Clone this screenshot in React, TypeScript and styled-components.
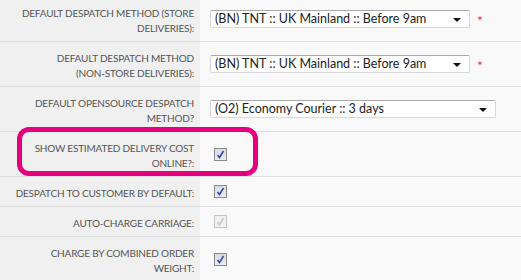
import React from "react";
import styled, { createGlobalStyle } from "styled-components";

const GlobalStyle = createGlobalStyle`
    html, body {
        margin: 0;
        padding: 0;
        background: #f9f9f9;
        font-family: Lato, "Open Sans", sans-serif;
        overflow: hidden;
    }
`

const Page = styled.div`
    position: relative;
    width: 521px;
    height: 280px;
    overflow: hidden;
`

const Table = styled.div`
    margin-top: -3px;
    display: flex;
    flex-direction: column;
`

const Row = styled.div`
    display: grid;
    grid-template-columns: 200px 1fr;
    border-bottom: 1px solid #dddddd;
`

const Label = styled.div`
    background: #f0f0f0;
    color: #555555;
    font-size: 10px;
    letter-spacing: -0.2px;
    line-height: 15px;
    text-transform: uppercase;
    text-align: right;
    padding: 9px 6px 5px 10px;
    display: flex;
    align-items: center;
    justify-content: flex-end;
`

const NoWrap = styled.span`
    white-space: nowrap;
`

const Value = styled.div`
    display: flex;
    align-items: center;
    gap: 7px;
    padding: 0 10px;
`

const Select = styled.div<{ $width: number }>`
    position: relative;
    box-sizing: border-box;
    width: ${(p) => p.$width}px;
    height: 18px;
    background: #ffffff;
    border: 1px solid #d8d8d8;
    border-top-color: #a9a9a9;
    border-radius: 2px;
    color: #222222;
    font-size: 12.5px;
    line-height: 16px;
    padding: 0 4px;
    white-space: nowrap;
    &::after {
        content: "";
        position: absolute;
        right: 8px;
        top: 7px;
        border-left: 4px solid transparent;
        border-right: 4px solid transparent;
        border-top: 4px solid #111111;
    }
`

const Required = styled.span`
    color: #f0344a;
    font-size: 14px;
    line-height: 14px;
    padding-top: 4px;
`

const Box = styled.span<{ $disabled?: boolean }>`
    box-sizing: border-box;
    width: 13px;
    height: 13px;
    margin-left: 4px;
    border: 1px solid ${(p) => (p.$disabled ? "#c4c4c4" : "#8a8a8a")};
    background: ${(p) => (p.$disabled ? "#f2f2f2" : "linear-gradient(#d7dbe6, #e9ecf2)")};
    display: flex;
    align-items: center;
    justify-content: center;
`

const Highlight = styled.div`
    position: absolute;
    left: 17px;
    top: 127px;
    width: 241px;
    height: 49px;
    box-sizing: border-box;
    border: 5px solid #e6007e;
    border-radius: 12px;
    pointer-events: none;
`

const Check = ({ disabled }: { disabled?: boolean }) => (
    <Box $disabled={disabled}>
        <svg width="9" height="9" viewBox="0 0 9 9">
            <path d="M1.5 5 L3.5 7.5 L7.5 1" fill="none" stroke={disabled ? "#c8c8c8" : "#3550a8"} strokeWidth="1.6" />
        </svg>
    </Box>
);

const App: React.FC = () => {
    return (
        <Page>
            <GlobalStyle />
            <Table>
                <Row>
                    <Label>Default despatch method (store deliveries):</Label>
                    <Value>
                        <Select $width={260}>(BN) TNT :: UK Mainland :: Before 9am</Select>
                        <Required>*</Required>
                    </Value>
                </Row>
                <Row>
                    <Label>
                        <span>Default despatch method <NoWrap>(non-store deliveries):</NoWrap></span>
                    </Label>
                    <Value>
                        <Select $width={260}>(BN) TNT :: UK Mainland :: Before 9am</Select>
                        <Required>*</Required>
                    </Value>
                </Row>
                <Row>
                    <Label>Default opensource despatch method?</Label>
                    <Value>
                        <Select $width={286}>(O2) Economy Courier :: 3 days</Select>
                    </Value>
                </Row>
                <Row>
                    <Label>Show estimated delivery cost online?:</Label>
                    <Value><Check /></Value>
                </Row>
                <Row>
                    <Label>Despatch to customer by default:</Label>
                    <Value><Check /></Value>
                </Row>
                <Row>
                    <Label>Auto-charge carriage:</Label>
                    <Value><Check disabled /></Value>
                </Row>
                <Row>
                    <Label>
                        <span>Charge by combined order <NoWrap>weight:</NoWrap></span>
                    </Label>
                    <Value><Check /></Value>
                </Row>
            </Table>
            <Highlight />
        </Page>
    );
};

export default App;
